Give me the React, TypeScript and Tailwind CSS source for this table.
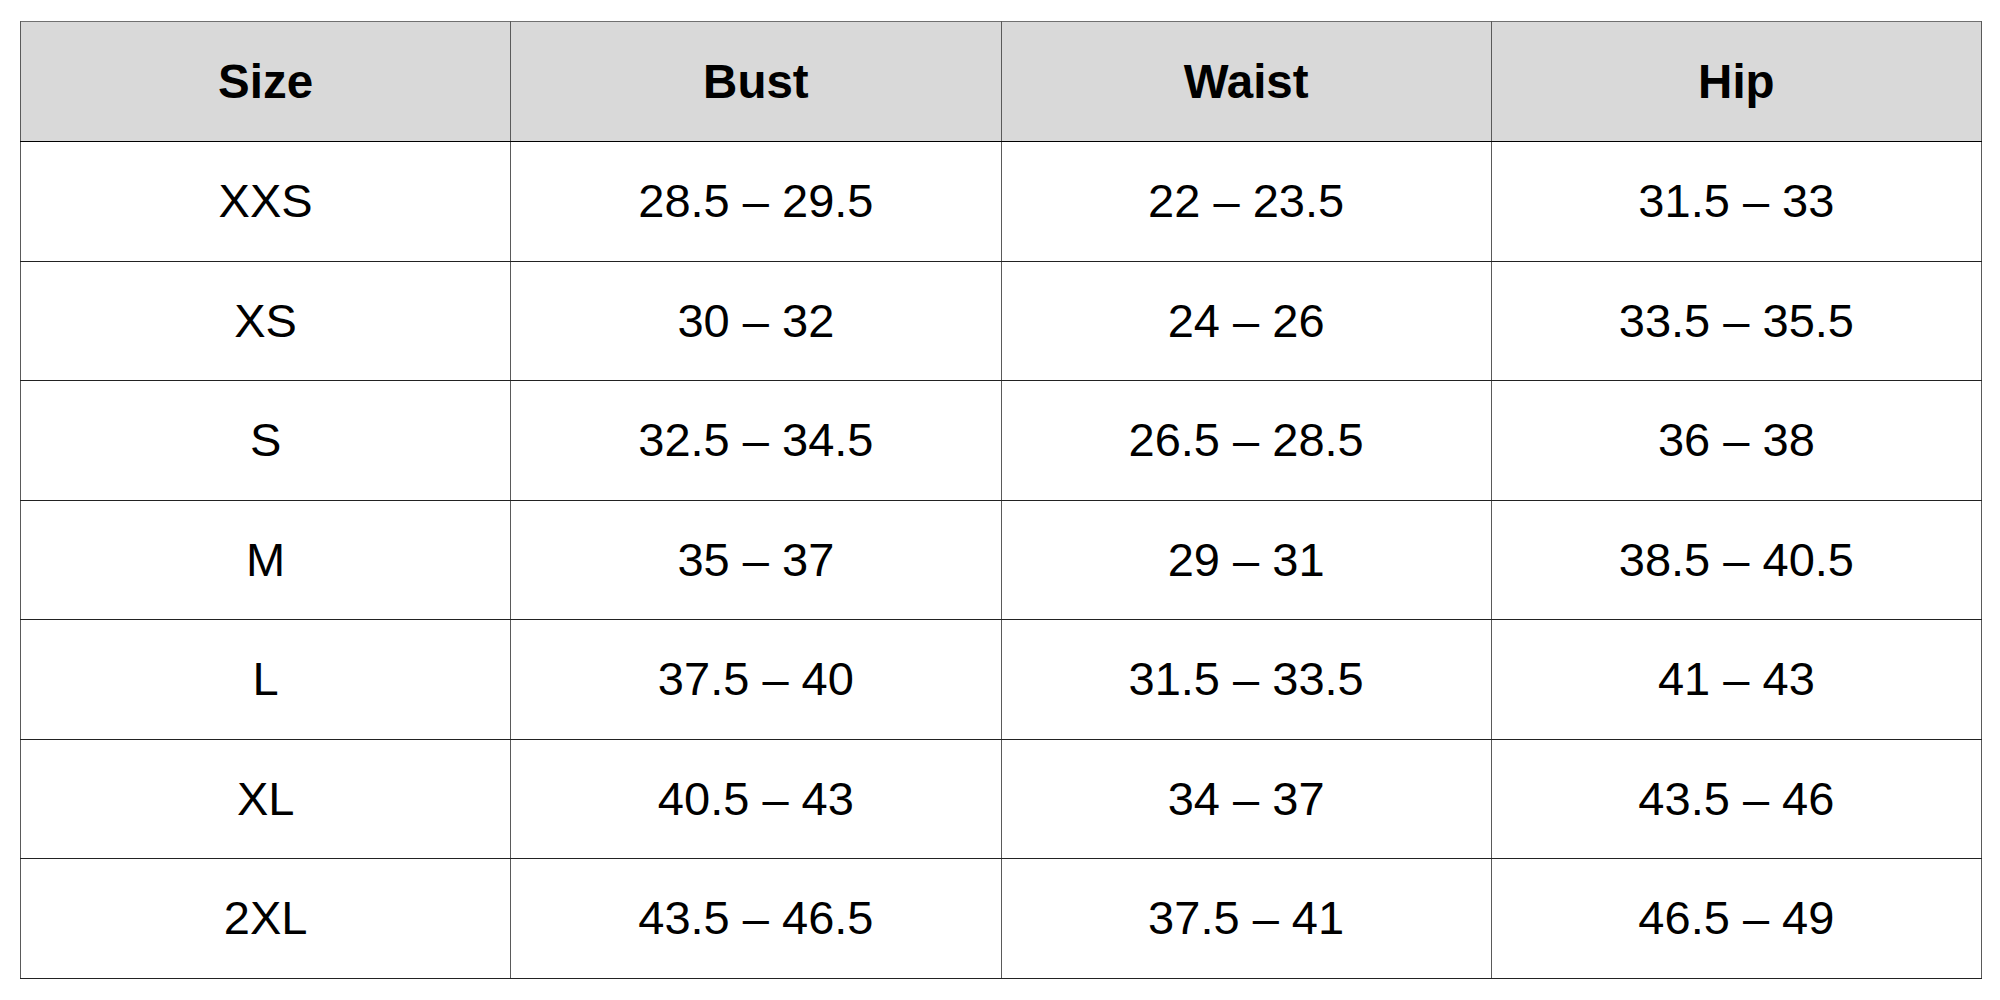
import React from 'react'

const rows = [
  ['XXS', '28.5 – 29.5', '22 – 23.5', '31.5 – 33'],
  ['XS', '30 – 32', '24 – 26', '33.5 – 35.5'],
  ['S', '32.5 – 34.5', '26.5 – 28.5', '36 – 38'],
  ['M', '35 – 37', '29 – 31', '38.5 – 40.5'],
  ['L', '37.5 – 40', '31.5 – 33.5', '41 – 43'],
  ['XL', '40.5 – 43', '34 – 37', '43.5 – 46'],
  ['2XL', '43.5 – 46.5', '37.5 – 41', '46.5 – 49'],
]

const headers = ['Size', 'Bust', 'Waist', 'Hip']

const App: React.FC = () => {
  return (
    <div className="w-[2000px] h-[1000px] bg-white pt-[21px] pl-[20px] font-['Liberation_Sans',Arial,sans-serif] text-black">
      <table className="w-[1962px] table-fixed border-collapse border-[1.5px] border-[#707070]">
        <thead>
          <tr className="h-[120px] bg-[#d9d9d9]">
            {headers.map((h) => (
              <th key={h} className="border-x-[1.5px] border-b border-x-[#5a5a5a] border-b-black text-[47.5px] font-bold text-center align-middle p-0">
                {h}
              </th>
            ))}
          </tr>
        </thead>
        <tbody>
          {rows.map((row) => (
            <tr key={row[0]} className="h-[119.5px]">
              {row.map((cell, i) => (
                <td key={i} className="border-x-[1.5px] border-b border-x-[#5a5a5a] border-b-[#222] text-[47px] text-center align-middle p-0">
                  {cell}
                </td>
              ))}
            </tr>
          ))}
        </tbody>
      </table>
    </div>
  )
}

export default App
